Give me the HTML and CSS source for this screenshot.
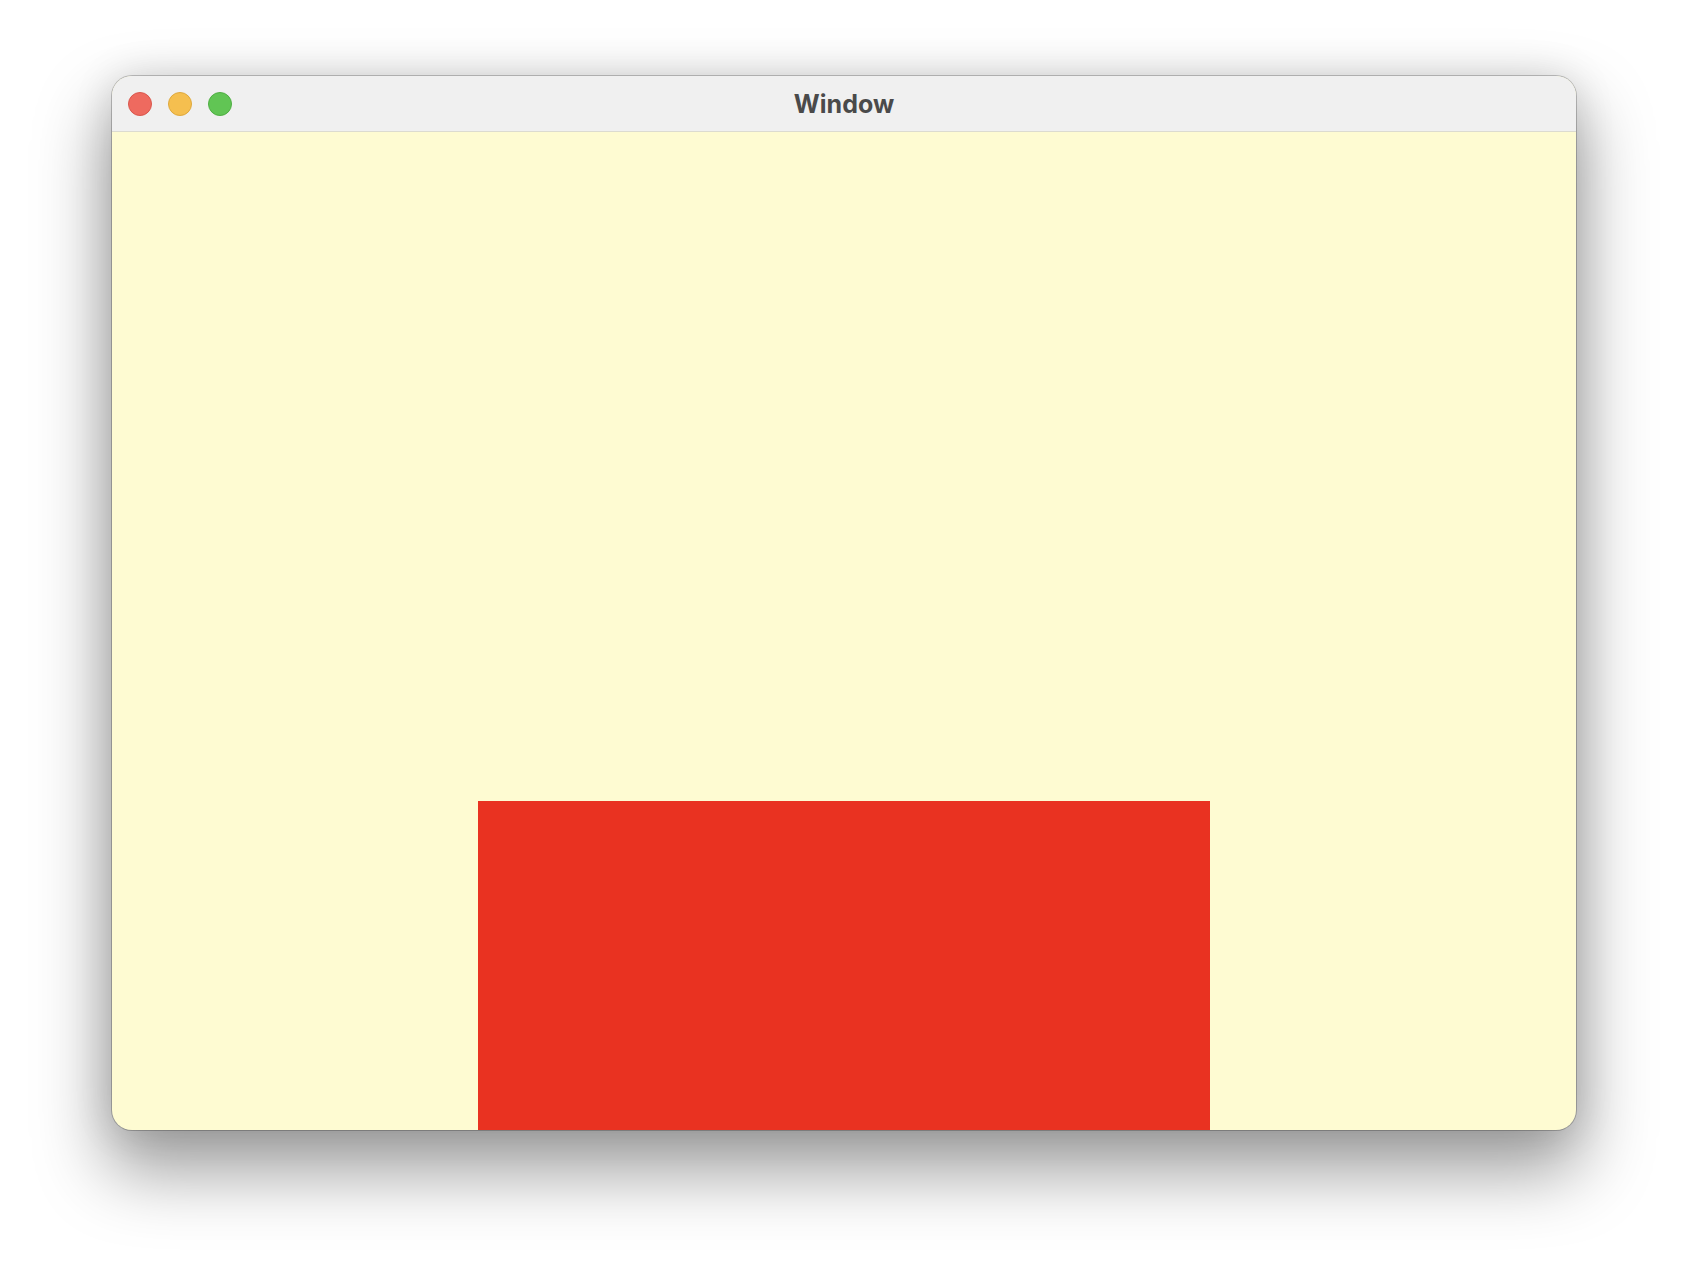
FILE: index.html
```html
<!DOCTYPE html>
<html>
<head>
<meta charset="utf-8">
<link rel="stylesheet" href="styles.css">
</head>
<body>
<div class="stage">
  <div class="window">
    <div class="titlebar">
      <div class="lights">
        <span class="light red"></span>
        <span class="light yellow"></span>
        <span class="light green"></span>
      </div>
      <div class="title">Window</div>
    </div>
    <div class="content">
      <div class="block"></div>
    </div>
  </div>
</div>
</body>
</html>
```
FILE: styles.css
```css
html, body {
  margin: 0;
  padding: 0;
  background: #ffffff;
}
.stage {
  width: 1688px;
  height: 1278px;
  padding: 76px 0 0 112px;
  box-sizing: border-box;
}
.window {
  width: 1464px;
  height: 1054px;
  border-radius: 20px;
  overflow: hidden;
  display: flex;
  flex-direction: column;
  background: #fefbd2;
  box-shadow: 0 0 0 1px rgba(0, 0, 0, 0.22), 0 36px 70px 6px rgba(0, 0, 0, 0.38), 0 0 40px rgba(0, 0, 0, 0.12);
}
.titlebar {
  height: 55px;
  flex: none;
  background: #f0f0f0;
  border-bottom: 1px solid #dcdbd0;
  position: relative;
  display: flex;
  align-items: center;
  justify-content: center;
}
.lights {
  position: absolute;
  left: 16px;
  top: 16px;
  display: flex;
  gap: 16px;
}
.light {
  width: 24px;
  height: 24px;
  border-radius: 50%;
  box-sizing: border-box;
}
.red { background: #ee6a5f; border: 1px solid #d9574d; }
.yellow { background: #f5bf4f; border: 1px solid #dea83d; }
.green { background: #61c554; border: 1px solid #4fae43; }
.title {
  font-family: "Inter", "Open Sans", sans-serif;
  font-weight: 700;
  font-size: 25px;
  color: #4a4a4a;
  padding-top: 1px;
}
.content {
  flex: 1;
  display: flex;
  flex-direction: column;
  align-items: center;
  padding-top: 669px;
  overflow: hidden;
}
.block {
  width: 732px;
  height: 400px;
  flex: none;
  background: #e93221;
}
```
